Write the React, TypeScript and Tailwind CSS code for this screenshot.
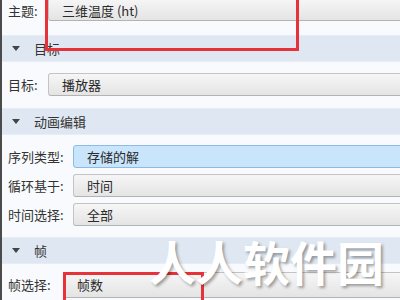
const font = { fontFamily: '"Noto Sans CJK SC", "Noto Sans", sans-serif' };

function Field({ value, active = false, className = "" }: { value: string; active?: boolean; className?: string }) {
  return (
    <div
      className={
        "flex-1 flex items-center pl-[13px] rounded-[3px] border text-[13px] text-[#2a2a2a] " +
        (active
          ? "bg-[#c9e5fc] border-[#8dbbe3]"
          : "bg-gradient-to-b from-[#f6f6f6] to-[#e4e4e4] border-[#c3c3c3] border-b-[#b3b3b3]") +
        " " +
        className
      }
    >
      {value}
    </div>
  );
}

function Row({ label, value, labelW, active, className = "" }: { label: string; value: string; labelW: string; active?: boolean; className?: string }) {
  return (
    <div className={"flex h-[23px] items-stretch " + className}>
      <div className={"flex items-center pl-[6px] text-[13px] text-[#333] " + labelW}>{label}</div>
      <Field value={value} active={active} className="-mr-[4px]" />
    </div>
  );
}

function Section({ title, className = "" }: { title: string; className?: string }) {
  return (
    <div className={"flex items-center h-[27px] bg-[#dfe8f2] border-y border-[#e6edf5] " + className}>
      <svg width="8" height="5" viewBox="0 0 8 5" className="ml-[10px]">
        <polygon points="0,0 8,0 4,5" fill="#444" />
      </svg>
      <span className="ml-[14px] text-[13px] text-[#333]">{title}</span>
    </div>
  );
}

export default function App() {
  return (
    <div className="relative w-[400px] h-[300px] overflow-hidden flex bg-[#f8fafd]" style={font}>
      <div className="w-[2px] bg-[#4b4b4b]" />
      <div className="flex-1 flex flex-col">
        {/* 主题 */}
        <div className="flex h-[23px] -mt-[2px] items-stretch">
          <div className="flex items-center w-[46px] pl-[6px] pt-[2px] text-[13px] text-[#333]">主题:</div>
          <Field value="三维温度 (ht)" className="-mr-[4px] pt-[2px]" />
        </div>

        <Section title="目标" className="mt-[14px] h-[26px]" />
        <Row label="目标:" value="播放器" labelW="w-[46px]" className="mt-[11px]" />

        <Section title="动画编辑" className="mt-[12px]" />
        <Row label="序列类型:" value="存储的解" labelW="w-[71px]" active className="mt-[10px]" />
        <Row label="循环基于:" value="时间" labelW="w-[71px]" className="mt-[6px]" />
        <Row label="时间选择:" value="全部" labelW="w-[71px]" className="mt-[6px]" />

        <Section title="帧" className="mt-[11px]" />
        <Row label="帧选择:" value="帧数" labelW="w-[61px]" className="mt-[8px] !h-[26px]" />
      </div>

      {/* red highlight boxes */}
      <div className="absolute left-[45px] top-[-10px] w-[254px] h-[61px] border-[3px] border-[#e8323a]" />
      <div className="absolute left-[63px] top-[272px] w-[141px] h-[40px] border-[3px] border-[#e8323a]" />

      {/* watermark */}
      <div
        className="absolute left-[149px] top-[237px] text-[47px] font-bold leading-none text-white [text-shadow:2px_2px_3px_rgba(0,0,0,0.35)]"
        style={font}
      >
        人人软件园
      </div>
    </div>
  );
}
